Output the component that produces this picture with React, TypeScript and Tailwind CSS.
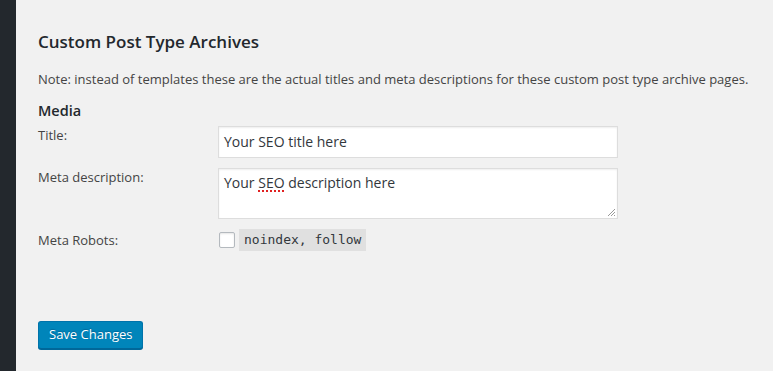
export default function App() {
  return (
    <div className="flex h-[371px] w-[773px] overflow-hidden font-['Open_Sans',sans-serif] text-[#23282d]">
      {/* admin menu strip */}
      <div className="w-4 shrink-0 bg-[#23282d]" />

      <div className="flex-1 bg-[#f1f1f1] pl-[22px]">
        <h2 className="mt-[30px] text-[17px] font-semibold leading-[23.4px] text-[#23282d]">
          Custom Post Type Archives
        </h2>
        <p className="mt-[17px] text-[13px] leading-[19.5px] text-[#444]">
          Note: instead of templates these are the actual titles and meta descriptions for these custom post type archive pages.
        </p>
        <h3 className="mt-[11px] text-[14.5px] font-semibold leading-[20px] text-[#23282d]">Media</h3>

        <div className="mt-[5px] grid grid-cols-[180px_400px] gap-y-[10px] text-[13px] text-[#444]">
          <label className="leading-[19.5px]">Title:</label>
          <div className="flex h-[32px] items-center border border-[#ddd] bg-white px-[5px] text-[14px] text-[#32373c] shadow-[inset_0_1px_2px_rgba(0,0,0,0.07)]">
            Your SEO title here
          </div>

          <label className="leading-[19.5px]">Meta description:</label>
          <div className="relative h-[51px] border border-[#ddd] bg-white px-[5px] pt-[4px] text-[14px] leading-[19.6px] text-[#32373c] shadow-[inset_0_1px_2px_rgba(0,0,0,0.07)]">
            Your{" "}
            <span className="underline decoration-[#e02020] decoration-dotted decoration-2 underline-offset-[3px]">SEO</span>{" "}
            description here
            <svg className="absolute bottom-[1px] right-[1px]" width="10" height="10" viewBox="0 0 10 10">
              <path d="M9 2 L2 9 M9 5 L5 9 M9 8 L8 9" stroke="#999" strokeWidth="1" />
            </svg>
          </div>

          <label className="pt-[2px] leading-[19.5px]">Meta Robots:</label>
          <div className="flex items-center">
            <span className="ml-px h-[16px] w-[16px] rounded-[2px] border border-[#b4b9be] bg-white shadow-[inset_0_1px_2px_rgba(0,0,0,0.1)]" />
            <code className="ml-[4px] bg-[#e0e0e0] px-[5px] py-[2px] font-['DejaVu_Sans_Mono',monospace] text-[13px] leading-[18px] text-[#32373c]">
              noindex, follow
            </code>
          </div>
        </div>

        <button className="mt-[70px] h-[28px] rounded-[3px] border border-[#0073aa] border-b-[#006799] bg-[#0085ba] px-[10px] text-[13px] text-white shadow-[0_1px_0_#006799] [text-shadow:0_-1px_1px_#006799]">
          Save Changes
        </button>
      </div>
    </div>
  );
}
